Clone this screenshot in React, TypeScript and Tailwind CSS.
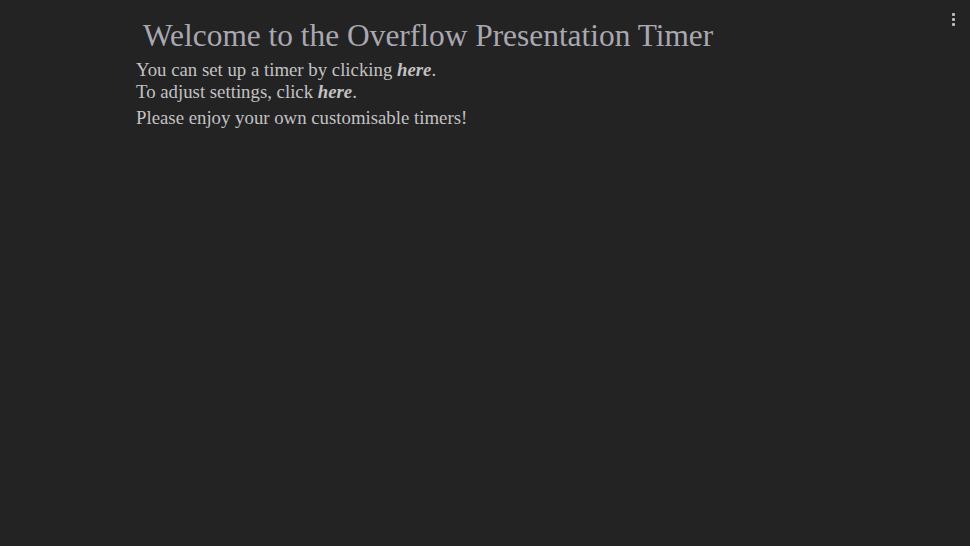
export default function App() {
  return (
    <div className="relative min-h-[546px] w-full bg-[#232323] font-['Liberation_Serif',serif]">
      <div className="absolute right-[15px] top-[13px] flex flex-col gap-[2px]">
        {[0, 1, 2].map((i) => (
          <div key={i} className="h-[3px] w-[3px] rounded-[1px] bg-[#bdbdbd]" />
        ))}
      </div>
      <div className="pl-[136px] pt-[17px]">
        <h1 className="ml-[7px] text-[31.4px] leading-[38px] text-[#a9a8b2]">
          Welcome to the Overflow Presentation Timer
        </h1>
        <div className="mt-[4px] text-[18.8px] leading-[22px] text-[#c2c2c4]">
          <p>
            You can set up a timer by clicking <b><i>here</i></b>.
          </p>
          <p>
            To adjust settings, click <b><i>here</i></b>.
          </p>
          <p className="mt-[4px]">Please enjoy your own customisable timers!</p>
        </div>
      </div>
    </div>
  )
}
